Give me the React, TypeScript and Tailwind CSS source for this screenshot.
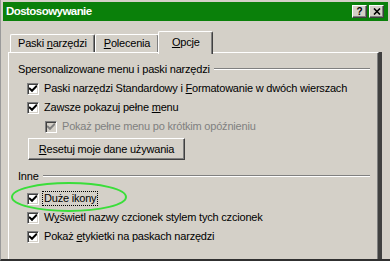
import React from 'react';

// Klasyczne pole wyboru Windows 2000
function Checkbox({ disabled = false }: { disabled?: boolean }) {
  return (
    <span
      className={`flex h-[12px] w-[12px] shrink-0 items-center justify-center border border-t-[#808080] border-l-[#808080] border-r-white border-b-white shadow-[inset_1px_1px_0_#404040,inset_-1px_-1px_0_#d4d0c8] ${
        disabled ? 'bg-[#d4d0c8]' : 'bg-white'
      }`}
    >
      <svg width="8" height="8" viewBox="0 0 8 8">
        <path d="M0.8 3.6 L3 5.8 L7.2 1.4" fill="none" stroke={disabled ? '#808080' : '#000'} strokeWidth="2" strokeLinecap="square" />
      </svg>
    </span>
  );
}

function Row({ children, indent = false, disabled = false }: { children: React.ReactNode; indent?: boolean; disabled?: boolean }) {
  return (
    <div className={`flex h-[19px] items-center gap-[5px] ${indent ? 'pl-[36px]' : 'pl-[18px]'}`}>
      <Checkbox disabled={disabled} />
      <span className={disabled ? 'text-[#808080]' : 'text-black'}>{children}</span>
    </div>
  );
}

function GroupLabel({ children }: { children: React.ReactNode }) {
  return (
    <div className="flex h-[18px] items-center pl-[9px] pr-[8px]">
      <span>{children}</span>
      <div className="ml-[4px] h-[2px] flex-1 border-t border-t-[#808080] border-b border-b-white" />
    </div>
  );
}

function Tab({ children, active = false }: { children: React.ReactNode; active?: boolean }) {
  return (
    <div
      className={`flex items-center justify-center border-t border-l border-t-white border-l-white border-r border-r-[#404040] rounded-t-[2px] bg-[#d4d0c8] shadow-[inset_-1px_0_0_#808080] ${
        active ? 'relative z-10 -mb-[2px] h-[23px] w-[55px] -ml-[1px]' : 'h-[18px]'
      }`}
    >
      {children}
    </div>
  );
}

export default function App() {
  return (
    <div className="relative h-[261px] w-[390px] overflow-hidden border-l border-l-[#9a9a9a] border-b-2 border-b-[#303030] bg-[#d4d0c8] font-['Liberation_Sans',Arial,sans-serif] text-[11px] tracking-[-0.2px] text-black">
      {/* Pasek tytułu */}
      <div className="mx-[2px] mt-[2px] flex h-[19px] items-center justify-between bg-[#0a800a] pl-[3px] pr-[4px]">
        <span className="text-[11.5px] font-bold tracking-[-0.55px] text-white">Dostosowywanie</span>
        <div className="flex gap-[2px]">
          <div className="flex h-[13px] w-[15px] items-center justify-center border border-t-white border-l-white border-r-[#404040] border-b-[#404040] bg-[#d4d0c8] shadow-[inset_-1px_-1px_0_#808080] text-[10px] font-bold leading-none">
            ?
          </div>
          <div className="flex h-[13px] w-[15px] items-center justify-center border border-t-white border-l-white border-r-[#404040] border-b-[#404040] bg-[#d4d0c8] shadow-[inset_-1px_-1px_0_#808080]">
            <svg width="8" height="7" viewBox="0 0 8 7">
              <path d="M1 0.5 L7 6.5 M7 0.5 L1 6.5" stroke="#000" strokeWidth="1.6" />
            </svg>
          </div>
        </div>
      </div>

      {/* Zakładki */}
      <div className="ml-[9px] mt-[10px] flex h-[21px] items-end">
        <Tab>
          <span className="px-[7px]">
            Paski <span className="underline">n</span>arzędzi
          </span>
        </Tab>
        <Tab>
          <span className="px-[8px]">
            <span className="underline">P</span>olecenia
          </span>
        </Tab>
        <Tab active>
          <span className="-mt-[2px]">
            <span className="underline">O</span>pcje
          </span>
        </Tab>
      </div>

      {/* Panel */}
      <div className="ml-[7px] h-[240px] w-[371px] border-t border-l border-t-white border-l-white border-r border-r-[#404040] shadow-[inset_-1px_0_0_#808080,3px_0_0_#404040]">
        <div className="pt-[7px]">
          <GroupLabel>Spersonalizowane menu i paski narzędzi</GroupLabel>
          <div className="mt-[1px]">
            <Row>
              Paski narzędzi Standardowy i <span className="underline">F</span>ormatowanie w dwóch wierszach
            </Row>
            <Row>
              Zawsze pokazuj pełne <span className="underline">m</span>enu
            </Row>
            <Row indent disabled>
              Pokaż pełne menu po krótkim opóźnieniu
            </Row>
          </div>
          <div className="mt-[2px] pl-[19px]">
            <div className="flex h-[22px] w-[157px] items-center justify-center border border-t-white border-l-white border-r-[#404040] border-b-[#404040] shadow-[inset_-1px_-1px_0_#808080]">
              <span>
                <span className="underline">R</span>esetuj moje dane używania
              </span>
            </div>
          </div>
          <div className="mt-[7px]">
            <GroupLabel>Inne</GroupLabel>
          </div>
          <div className="mt-[4px]">
            <div className="flex h-[19px] items-center gap-[3px] pl-[18px]">
              <Checkbox />
              <span className="border border-dotted border-black px-[1px] leading-[13px]">Duże ikony</span>
            </div>
            <Row>
              W<span className="underline">y</span>świetl nazwy czcionek stylem tych czcionek
            </Row>
            <Row>
              Pokaż <span className="underline">e</span>tykietki na paskach narzędzi
            </Row>
          </div>
        </div>
      </div>

      {/* Zaznaczenie zieloną elipsą */}
      <svg className="pointer-events-none absolute left-[8px] top-[181px]" width="120" height="32" viewBox="0 0 120 32">
        <ellipse cx="60" cy="16" rx="57" ry="14" fill="none" stroke="#3ade3a" strokeWidth="2" />
      </svg>
    </div>
  );
}
